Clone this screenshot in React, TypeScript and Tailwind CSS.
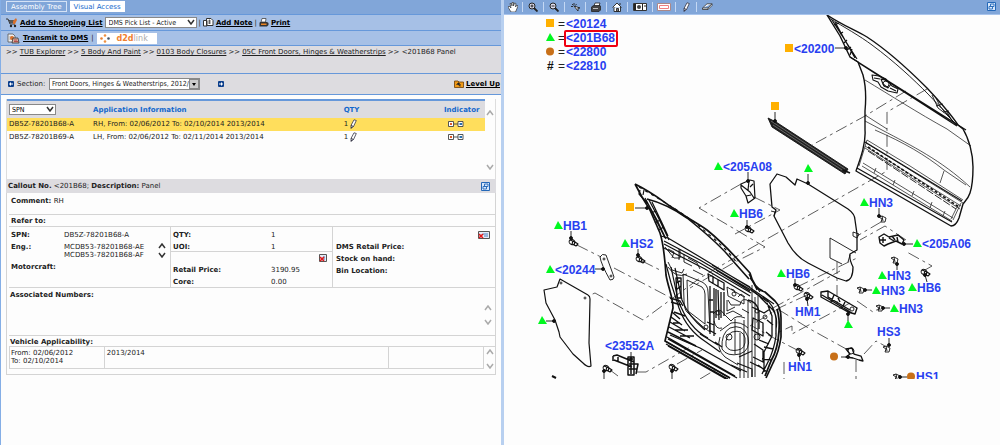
import type { ReactNode } from 'react'

type Mark = 'square' | 'triangle' | 'circle' | 'hash'

interface Callout {
  x: number
  y: number
  mark?: Mark
  text?: string
}

// x is the left edge of the mark (or of the text if there is no mark), y is the baseline
const callouts: Callout[] = [
  { x: 785, y: 53, mark: 'square', text: '<20200' },
  { x: 771, y: 111, mark: 'square' },
  { x: 626, y: 212, mark: 'square' },
  { x: 714, y: 171, mark: 'triangle', text: '<205A08' },
  { x: 804, y: 173, mark: 'triangle' },
  { x: 730, y: 218, mark: 'triangle', text: 'HB6' },
  { x: 860, y: 207, mark: 'triangle', text: 'HN3' },
  { x: 913, y: 248, mark: 'triangle', text: '<205A06' },
  { x: 554, y: 230, mark: 'triangle', text: 'HB1' },
  { x: 621, y: 248, mark: 'triangle', text: 'HS2' },
  { x: 546, y: 274, mark: 'triangle', text: '<20244' },
  { x: 538, y: 325, mark: 'triangle' },
  { x: 777, y: 278, mark: 'triangle', text: 'HB6' },
  { x: 878, y: 280, mark: 'triangle', text: 'HN3' },
  { x: 908, y: 292, mark: 'triangle', text: 'HB6' },
  { x: 872, y: 295, mark: 'triangle', text: 'HN3' },
  { x: 890, y: 313, mark: 'triangle', text: 'HN3' },
  { x: 844, y: 329, mark: 'triangle' },
  { x: 830, y: 361, mark: 'circle' },
  { x: 907, y: 381, mark: 'circle', text: 'HS1' },
  { x: 795, y: 316, text: 'HM1' },
  { x: 877, y: 336, text: 'HS3' },
  { x: 788, y: 371, text: 'HN1' },
  { x: 605, y: 350, text: '<23552A' },
]

const legend: { mark: Mark; text: string }[] = [
  { mark: 'square', text: '<20124' },
  { mark: 'triangle', text: '<201B68' },
  { mark: 'circle', text: '<22800' },
  { mark: 'hash', text: '<22810' },
]

// from x, from y, to x, to y
const arrows = [
  [835, 48, 846, 48],
  [775, 112, 775, 121],
  [635, 208, 647, 208],
  [748, 172, 748, 181],
  [808, 174, 808, 183],
  [747, 220, 747, 227],
  [879, 208, 879, 216],
  [913, 244, 904, 244],
  [571, 231, 571, 238],
  [638, 249, 638, 255],
  [595, 269, 603, 269],
  [546, 321, 554, 321],
  [795, 279, 795, 285],
  [897, 270, 897, 264],
  [927, 282, 925, 275],
  [872, 290, 865, 290],
  [890, 308, 883, 308],
  [848, 321, 848, 314],
  [841, 357, 848, 357],
  [907, 377, 900, 377],
  [808, 306, 807, 299],
  [889, 338, 889, 345],
  [800, 361, 799, 355],
  [631, 352, 631, 359],
  [604, 379, 604, 371],
  [672, 379, 672, 371],
]

const bolts = [
  [572, 242],
  [639, 259],
  [748, 229],
  [797, 287],
  [807, 295],
  [799, 351],
  [924, 272],
  [606, 368],
  [672, 367],
]

const nuts = [
  [883, 219],
  [895, 260],
  [861, 290],
  [880, 308],
  [887, 349],
  [897, 377],
]

const dashes = [
  'M927 89 887 112 887 171 751 248 700 278 643 320 595 293 588 296',
  'M906 91 865 116 812 145',
  'M741 184 699 208 765 247 735 262 690 288',
  'M754 197 780 210 735 234',
  'M577 245 601 257M614 268 673 299',
  'M642 261 662 271',
  'M881 222 857 236M906 240 885 226 860 240',
  'M797 287 857 258M773 308 840 271',
  'M925 270 932 266 905 251',
  'M837 262V308M850 303 792 334V326L775 334',
  'M857 301 873 312 880 308',
  'M807 295 781 307 750 326',
  'M799 351 770 336 752 326M848 350 810 329 776 308',
  'M864 354 876 341 885 346M856 360V379M784 362V379',
  'M610 370 618 376M637 372 646 372 690 347M677 364 702 350M700 379 715 370',
]

const MarkShape = ({ mark }: { mark: Mark }) => {
  if (mark === 'square') return <rect y="-9" width="8" height="8" fill="#ffb000" />
  if (mark === 'triangle') return <path d="M0 -1 4 -9 9 -1Z" fill="#00f820" />
  if (mark === 'circle') return <circle cx="4" cy="-4.5" r="4" fill="#c87018" />
  return (
    <text x="1" y="0" fontSize="12" fontWeight="bold" fill="#111">
      #
    </text>
  )
}

const OuterDoor = () => (
  <g>
    <path
      d="M827 15C842 25 853 29 867 37C890 52 908 69 927 88C941 103 951 114 958 125L963 129C969 139 973 154 973 167C973 179 972 187 970 193C968 199 965 201 963 204L959 218Q956 226 951 226L856 171C861 157 866 143 865 130V111Q867 90 863 75L858 62 850 57 840 36 827 15Z"
      strokeWidth="1.4"
    />
    <path d="M829 18C844 27 860 36 872 45C895 62 913 79 928 94C942 109 951 118 956 125" />
    <path d="M850 57 966 130M859 63 957 126" strokeWidth="1.3" />
    <path d="M832 20 857 59M835 22 846 42 855 58M840 34 843 32M844 43 847 40M847 50 851 47M834 25 839 23M850 55 852 49" strokeWidth="1.2" />
    <path d="M932 95 938 108 946 114 957 125M936 98 940 106 950 117M936 106 943 104M943 112 949 111M947 112 952 121" />
    <path d="M872 75 879 76 886 79 892 86 898 89 897 93 888 91 881 87 878 82 873 80ZM874 78 880 79M881 79 883 84 888 88 891 84 885 80ZM890 88 896 91" strokeWidth="1.1" />
    <circle cx="886" cy="84" r="3" />
    <g strokeWidth=".7">
      <path d="M865 80C890 95 918 113 947 129L971 146M865 115 887 129M865 121 882 130" />
      <path d="M875 130C905 143 925 155 944 170L966 185M882 130C912 146 941 160 970 187M944 171 940 183" />
      <path d="M867 140 910 166 963 200M866 143 907 168 963 203M865 146 905 171 961 206M865 148 960 209" />
      <path d="M867 140 859 166M961 203 953 220M958 205 951 219M863 163 953 218M862 166 952 221" />
      <path d="M876 168 874 173M895 180 893 185M914 191 912 196M932 202 930 208M945 211 943 216" />
    </g>
    <path d="M857 168 952 222M865 142 962 201" strokeWidth="1.2" />
    <path d="M868 147 959 207" strokeWidth="1.6" strokeDasharray="3 2" />
    <path d="M868 151 956 209" strokeDasharray="8 2" />
  </g>
)

const InnerDoor = () => (
  <g>
    <path
      d="M635 184C655 194 662 201 673 208C687 218 697 223 707 230C722 242 731 252 740 262L750 273Q754 289 765 292L775 301Q781 307 781 318V337Q779 352 773 363L766 378M730 378 665 341 673 308C673 297 668 287 666 275C665 261 664 245 660 233L650 210 642 197L635 184"
      strokeWidth="1.7"
    />
    <path d="M647 199C663 203 677 211 687 218C707 234 722 247 733 261L749 279" strokeWidth="1.6" />
    <path d="M640 190 639 194 648 204 665 238M645 198 657 220 666 239M649 200 659 219 669 240M652 202 663 225 668 236M655 223 660 220M651 213 656 211M658 230 664 227M644 190 643 195" strokeWidth="1.2" />
    <path d="M639 187C666 203 690 217 707 233Q726 248 738 264" strokeWidth="1.2" strokeDasharray="3 4" />
    <path d="M661 236 668 238 700 257 749 287 774 304M664 241 700 260 751 290 768 302M664 244 700 263 751 293M664 248 705 269 750 296M712 265 750 287M716 270 750 291" strokeWidth="1.2" />
    <path d="M665 247 674 258 680 258V249M668 249 674 252 672 258M668 262 672 270 682 273 684 269M679 249V260M668 267Q676 279 687 274M684 254V262L692 266M688 258 697 263 700 269M693 270 703 275" />
    <path d="M666 264 671 283 679 308C684 322 692 333 706 342L720 352M671 267 678 300C684 316 694 331 708 338M675 268 682 300Q688 316 705 330" strokeWidth="1.2" />
    <path d="M683 274 702 282Q708 285 708 292L710 332 702 326 687 312Q684 309 684 300ZM687 280 702 287Q705 290 705 294V324L688 311Z" />
    <path d="M676 278H681V298H677ZM676 283 680 281M676 290 681 286M670 298 680 301 683 306M671 302 681 305M674 312 685 316" strokeWidth="1.4" />
    <path d="M671 317 682 325M670 322 685 331M669 327 690 338M668 332 696 346M672 312 680 319M673 323H680M675 330H688M680 336H694" strokeWidth="1.4" />
    <path d="M665 341 730 378M667 337 735 376M666 344 728 379M668 346 726 379M670 335 700 348 741 371M668 339 737 378" strokeWidth="1.3" />
    <path d="M708 274 724 283V290L709 281ZM713 276V284M718 279V287M710 286V334M714 288V336M718 290 719 320M721 292V318M724 292V316M716 289V318M709 300H713M710 312H714M707 322 714 325M709 330 716 334" strokeWidth="1.3" />
    <path d="M727 287 744 297V304L728 296ZM731 289Q735 289 735 293M728 300 731 305H740M727 300V311L735 307M738 297 741 294 745 297M740 305Q741 298 747 300L751 303M726 314 733 311 742 316M742 309 749 313" />
    <circle cx="718" cy="313" r="2" />
    <circle cx="706" cy="327" r="2" />
    <circle cx="734" cy="294" r="2" />
    <circle cx="729" cy="337" r="3" />
    <path d="M713 314Q719 306 724 314L731 321Q736 314 745 318M714 321Q716 330 722 328M720 331 731 323Q741 321 748 328M722 349Q721 333 730 328Q743 323 748 337Q751 350 740 354Q727 357 722 349ZM726 346Q725 336 732 332Q743 329 745 338Q746 349 738 350Q729 352 726 346M720 337Q716 349 725 357L738 365" />
    <path d="M735 319V354M740 333V378M744 320V378M748 300V378M752 285V377M755 297V377M758 296V340" strokeWidth=".9" />
    <path d="M748 300Q757 302 759 311V329M752 307 764 313 770 309M753 318 763 323V336L752 330ZM760 297 773 310Q778 317 776 329M763 297Q775 305 776 319V336Q774 350 768 362L762 374M767 303 772 316V336L764 352V372M754 344 763 350V362L753 357M750 362 762 368M767 320 773 325M766 332 771 336M759 340 769 344M764 347 773 349M762 359 771 360M758 365 767 372" strokeWidth="1.3" />
    <circle cx="757" cy="337" r="3" />
    <circle cx="765" cy="317" r="2" />
    <circle cx="757" cy="311" r="2" />
    <path d="M777 309Q780 319 779 331Q778 349 771 361L765 376" strokeWidth="1.8" />
    <path d="M737 363 752 369V377M731 365 747 372M739 357 752 351M715 342 722 347M700 334 718 345M750 278 760 292M753 291 763 299M749 274 757 290" strokeWidth="1.2" />
  </g>
)

const SmallParts = () => (
  <g>
    <path d="M768 118 776 122 848 169 845 174 772 127Z" fill="#222" />
    <path d="M771 121 845 169M773 125 842 170" stroke="#aaa" strokeWidth=".5" />
    <path d="M843 170 850 173" strokeWidth="1.6" />
    <path
      d="M770 184 777 174 786 177 795 185 797 179 808 184 848 209Q855 214 855 220L857 234V250L850 254Q849 259 853 267Q853 280 846 281L837 278 808 263C798 258 792 250 788 243L774 216 776 210 772 207Z"
      strokeWidth="1.3"
    />
    <path d="M830 238 856 253M830 238V258L842 264M850 255 848 262M771 211 775 212 774 216M853 232 859 234 857 238 853 236Z" />
    <path d="M544 290 557 287 560 279 588 295Q590 296 590 299L589 343 591 366Q588 368 583 363L573 354 560 337 559 332 555 320 546 303Z" strokeWidth="1.2" />
    <circle cx="561" cy="283" r="1" />
    <circle cx="585" cy="298" r="1" />
    <path d="M600 257Q602 253 606 255L614 277Q614 280 610 280Q601 264 600 257Z" />
    <circle cx="604" cy="259" r="1" />
    <circle cx="611" cy="276" r="1" />
    <path d="M741 184 750 180 754 181 755 198 748 203 746 196 741 188ZM741 185 750 192 754 198M749 181 748 190M746 196 751 195M753 184 750 187" strokeWidth="1.2" />
    <path d="M879 237 884 234 889 237 898 235 904 240 902 244 896 241 888 244 884 246 880 243ZM883 237V243M889 238 894 241M897 237 898 242M880 240 886 240M892 236 895 240" strokeWidth="1.4" />
    <path d="M821 292 828 291 857 308 855 314 848 312 821 297ZM828 291V297L850 310M834 295 831 302M845 302 842 308M822 295 852 313M838 298 840 302" strokeWidth="1.4" />
    <circle cx="852" cy="309" r="2" />
    <path d="M846 349 852 348 854 354 861 356 863 361 859 360 853 358 846 357 850 354Z" strokeWidth="1.3" />
    <circle cx="851" cy="351" r="3" />
    <path d="M613 356 617 355 634 362M614 360 632 367M613 356V361M618 357V361M628 357H634V375H628ZM629 364H638L636 374M629 369H637M631 360V374" strokeWidth="1.5" />
    <path d="M552 376 556 378" strokeWidth="2" />
  </g>
)

const Diagram = () => (
  <svg
    viewBox="504 15 496 364"
    className="block w-full"
    fontFamily='"Liberation Sans", Arial, sans-serif'
    role="img"
    aria-label="Front door exploded view"
  >
    <g fill="none" stroke="#333" strokeWidth=".8" strokeDasharray="12 4 3 4">
      {dashes.map((d) => (
        <path key={d} d={d} />
      ))}
    </g>
    <g fill="none" stroke="#111" strokeWidth=".9" strokeLinejoin="round">
      <OuterDoor />
      <InnerDoor />
      <SmallParts />
      {bolts.map(([x, y]) => (
        <g key={`${x}-${y}`} transform={`translate(${x} ${y})`}>
          <ellipse rx="3" ry="2.5" transform="rotate(25)" />
          <path d="M-2 -2 3 0 6 2 4 4 0 2M1 -1 0 2M3 0 2 3" strokeWidth="1.1" />
        </g>
      ))}
      {nuts.map(([x, y]) => (
        <path key={`${x}-${y}`} transform={`translate(${x} ${y})`} d="M-4 -2 -1 -3 3 -1 2 3 -2 3 -1 0ZM-1 -3 0 2" />
      ))}
      {arrows.map(([x1, y1, x2, y2]) => (
        <g key={`${x1}-${y1}`}>
          <path d={`M${x1} ${y1} ${x2} ${y2}`} />
          <circle cx={x2} cy={y2} r="1.5" fill="#111" />
        </g>
      ))}
    </g>
    <g fontSize="12" fontWeight="bold" fill="#2840f0">
      {callouts.map(({ x, y, mark, text }) => (
        <g key={`${x}-${y}`} transform={`translate(${x} ${y})`}>
          {mark && <MarkShape mark={mark} />}
          {text && <text x={mark ? 9 : 0}>{text}</text>}
        </g>
      ))}
      {legend.map(({ mark, text }, i) => (
        <g key={text} transform={`translate(546 ${28 + i * 14})`}>
          <MarkShape mark={mark} />
          <text x="12" fill="#222" fontWeight="normal">
            =
          </text>
          <text x="20">{text}</text>
        </g>
      ))}
    </g>
    <rect x="565" y="31" width="52" height="15" rx="1" fill="none" stroke="#f00010" strokeWidth="2" />
  </svg>
)

const Chevron = ({ up, dark }: { up?: boolean; dark?: boolean }) => (
  <svg viewBox="0 0 8 6" className={`block w-2 h-1.5 fill-none ${dark ? 'stroke-[#333]' : 'stroke-[#aaa]'}`} strokeWidth="1.5">
    <path d={up ? 'M1 5 4 1 7 5' : 'M1 1 4 5 7 1'} />
  </svg>
)

const Scroller = ({ dark, className }: { dark?: boolean; className: string }) => (
  <div className={`flex flex-col justify-between ${className}`}>
    <button aria-label="Scroll up">
      <Chevron up dark={dark} />
    </button>
    <button aria-label="Scroll down">
      <Chevron dark={dark} />
    </button>
  </div>
)

const CartIcon = () => (
  <svg viewBox="0 0 12 10" className="w-3 h-2.5 shrink-0">
    <path d="M0 1H2L4 6H9" fill="none" stroke="#333" />
    <path d="M3 2H8V5H4Z" fill="#333" />
    <path d="M5 2V5M7 2V5" stroke="#ccc" strokeWidth=".5" />
    <path d="M7 3 10 0 11 2 9 6H7Z" fill="#d8702c" />
    <circle cx="5" cy="8" r="1.2" fill="#222" />
    <circle cx="9" cy="8" r="1.2" fill="#222" />
  </svg>
)

const NoteIcon = () => (
  <svg viewBox="0 0 11 9" className="w-[11px] h-[9px] shrink-0" fill="#fff" stroke="#333">
    <path d="M.5 2.5H4V8H.5ZM3.5 .5H8L10 2.5V7.5H3.5Z" />
    <path d="M5 3H8M5 5H8M6.5 1.5V6" strokeWidth=".7" />
  </svg>
)

const PrintIcon = () => (
  <svg viewBox="0 0 10 9" className="w-2.5 h-[9px] shrink-0">
    <path d="M3 .5H7L6.500 4H2Z" fill="#fff" stroke="#444" strokeWidth=".8" />
    <path d="M1 4H8L9.500 5V7L8 8.500H.5V5Z" fill="#333" />
    <path d="M2 5.500H7.500V7H2Z" fill="#e98220" />
  </svg>
)

const TransmitIcon = () => (
  <svg viewBox="0 0 13 11" className="w-[13px] h-[11px] shrink-0">
    <path d="M1 1H6L8 3V9H1Z" fill="#eee" stroke="#555" strokeWidth=".8" />
    <path d="M2 4H6M2 6H5" stroke="#888" strokeWidth=".6" />
    <circle cx="5" cy="5" r="2" fill="#d8702c" />
    <path d="M6 5H11L12 10H5Z" fill="#d8b0a0" stroke="#333" strokeWidth=".8" />
    <path d="M7 7H10M7 8.500H11" stroke="#a33" strokeWidth=".8" />
  </svg>
)

const LevelUpIcon = () => (
  <svg viewBox="0 0 10 8" className="w-2.5 h-2 shrink-0">
    <path d="M.5 1H4L5 2H9.500V7.500H.5Z" fill="#f09a18" stroke="#6b3d08" strokeWidth=".8" />
    <path d="M4.500 2.500 2.500 4.500H6.500ZM4 4.500H5V6H7" fill="#222" stroke="#222" strokeWidth=".5" />
  </svg>
)

const PencilIcon = () => (
  <svg viewBox="0 0 7 10" className="w-[7px] h-2.5" fill="#fff" stroke="#334">
    <path d="M4 .8 6.300 1.500 3.500 7.500 1 9.300 1 6.500Z" strokeWidth=".8" />
    <path d="M1 6.500 3.500 7.500M1 9.300 2 8" />
  </svg>
)

const IndicatorIcon = () => (
  <svg viewBox="0 0 16 6" className="w-4 h-1.5" fill="#fff" stroke="#444">
    <path d="M.5 .5H5.500V5.500H.5ZM10 .5H15V5.500H10ZM6 3H10" strokeWidth=".9" />
    <rect x="2" y="2" width="2" height="2" fill="#e05a2a" stroke="none" />
    <rect x="11.500" y="2" width="2.500" height="2" fill="#2870b0" stroke="none" />
  </svg>
)

const WindowIcon = () => (
  <svg viewBox="0 0 9 9" className="w-[9px] h-[9px]" fill="#d8e8fc" stroke="#2468b8">
    <path d="M.5 .5H8.500V8.500H.5Z" />
    <path d="M3.500 2H7V4.500H3.500ZM2 4.500H5.500V7H2Z" strokeWidth=".9" />
  </svg>
)

const ErrorIcon = ({ wide }: { wide?: boolean }) => (
  <svg viewBox={wide ? '0 0 12 8' : '0 0 8 8'} className={wide ? 'w-3 h-2' : 'w-2 h-2'} fill="#e4ecf8" stroke="#555">
    <path d={wide ? 'M.5 .5H11.500V7.500H.5Z' : 'M.5 .5H7.500V7.500H.5Z'} />
    <path d={wide ? 'M5 3H10M6 5H10' : 'M5 2V6'} stroke="#4a7fc0" />
    <path d="M1 3 5 7M5 3 1 7" stroke="#e01818" strokeWidth="1.600" />
  </svg>
)

const ArrowButton = ({ label, left }: { label: string; left?: boolean }) => (
  <button aria-label={label} className="flex items-center justify-center w-1.5 h-1.5 rounded-[1px] bg-[#0c3f8c]">
    <svg viewBox="0 0 4 4" className="w-1 h-1 fill-white">
      <path d={left ? 'M0 2 2 0V1.500H4V2.500H2V4Z' : 'M4 2 2 0V1.500H0V2.500H2V4Z'} />
    </svg>
  </button>
)

const ToolLink = ({ children }: { children: ReactNode }) => (
  <a href="#" className="font-bold underline text-black whitespace-nowrap">
    {children}
  </a>
)

const crumbs = ['TUB Explorer', '5 Body And Paint', '0103 Body Closures', '05C Front Doors, Hinges & Weatherstrips']

const rows = [
  { spn: 'DB5Z-78201B68-A', info: 'RH, From: 02/06/2012 To: 02/10/2014 2013/2014', qty: 1 },
  { spn: 'DB5Z-78201B69-A', info: 'LH, From: 02/06/2012 To: 02/11/2014 2013/2014', qty: 1 },
]

const Toolbars = () => (
  <>
    <div className="flex items-start gap-[3px] h-[15px] pl-[5px] pt-px bg-[#81a6d9] border-b border-[#6698da]">
      <button className="h-[11px] px-1 border border-[#d4e2f6] text-white whitespace-nowrap">Assembly Tree</button>
      <button className="h-[11px] px-1 bg-white text-[#1468cc] whitespace-nowrap">Visual Access</button>
    </div>
    <div className="flex items-center gap-0.5 h-4 pl-[5px] bg-[#a6c0e6] border-b border-[#6698da]">
      <CartIcon />
      <ToolLink>Add to Shopping List</ToolLink>
      <div className="relative">
        <select
          aria-label="Pick list"
          className='block appearance-none w-[92px] h-[11px] pl-[3px] bg-white border border-[#888] font-["DejaVu_Sans_Condensed","DejaVu_Sans",sans-serif]'
        >
          <option>DMS Pick List - Active</option>
        </select>
        <span className="absolute right-0.5 top-0.5 pointer-events-none">
          <Chevron dark />
        </span>
      </div>
      <span>|</span>
      <NoteIcon />
      <ToolLink>Add Note</ToolLink>
      <span>|</span>
      <PrintIcon />
      <ToolLink>Print</ToolLink>
    </div>
    <div className="flex items-center gap-[3px] h-[15px] pl-1.5 bg-[#a6c0e6] border-b border-[#6698da]">
      <TransmitIcon />
      <ToolLink>Transmit to DMS</ToolLink>
      <span>|</span>
      <a href="#" className="flex items-center gap-[7px] h-[11px] w-[60px] px-[3px] bg-white text-[#aaa]">
        <svg viewBox="0 0 10 9" className="w-2.5 h-[9px]">
          <circle cx="5" cy="1.500" r="1.300" fill="#f09040" />
          <circle cx="8.500" cy="4.500" r="1.300" fill="#456" />
          <circle cx="5" cy="7.500" r="1.300" fill="#f09040" />
          <circle cx="1.500" cy="4.500" r="1.300" fill="#e88030" />
        </svg>
        <span className="text-[8px] leading-[9px]">
          <b className="text-[#f08030]">d2d</b>link
        </span>
      </a>
    </div>
  </>
)

const PartsTable = () => (
  <div className="flex ml-[5px] mr-[5px] mt-1 h-20 border-r border-[#ddd]">
    <div className="flex-1 border-l border-[#ddd]">
      <table className="w-full table-fixed border-collapse">
        <thead>
          <tr className="h-[18px] text-left text-[#1468cc] bg-[#dddce0] border-t-2 border-[#6698da]">
            <th className="w-[18%] p-0 pl-0.5">
              <div className="relative w-[47px] font-normal text-black">
                <select
                  aria-label="Number type"
                  className='block appearance-none w-full h-[11px] pl-0.5 bg-white border border-[#888] font-["DejaVu_Sans_Condensed","DejaVu_Sans",sans-serif]'
                >
                  <option>SPN</option>
                </select>
                <span className="absolute right-0.5 top-0.5 pointer-events-none">
                  <Chevron dark />
                </span>
              </div>
            </th>
            <th className="p-0">Application Information</th>
            <th className="w-[21%] p-0">QTY</th>
            <th className="w-[41px] p-0">Indicator</th>
          </tr>
        </thead>
        <tbody className="leading-[8px]">
          {rows.map((row, i) => (
            <tr key={row.spn} className={`h-[13px] ${i === 0 ? 'bg-[#ffde5c]' : ''}`}>
              <td className="p-0 pl-0.5 pb-0.5">{row.spn}</td>
              <td className="p-0 pb-0.5">{row.info}</td>
              <td className="p-0 pb-0.5">
                <span className="flex items-center gap-0.5">
                  {row.qty}
                  <button aria-label="Edit quantity">
                    <PencilIcon />
                  </button>
                </span>
              </td>
              <td className="p-0 pl-1 pb-0.5">
                <IndicatorIcon />
              </td>
            </tr>
          ))}
        </tbody>
      </table>
    </div>
    <Scroller className="w-[10px] pt-[11px] pb-[9px] pl-px" />
  </div>
)

const Details = () => (
  <section className="mx-[5px] border border-t-0 border-[#d4d4d4] pl-0.5 pb-[5px]">
    <div className="h-[22px] pt-1 pl-0.5 border-b border-[#d4d4d4]">
      <b>Comment:</b> RH
    </div>
    <div className="h-3 pt-0.5 pl-0.5 border-b border-[#d4d4d4]">
      <b>Refer to:</b>
    </div>
    <div className="grid grid-cols-3 h-[61px] border-b border-[#d4d4d4] divide-x divide-[#d4d4d4]">
      <div className="flex pt-1 pl-0.5">
        <dl className="grid flex-1 grid-cols-[53px_1fr] content-start gap-y-1">
          <dt className="font-bold">SPN:</dt>
          <dd>DB5Z-78201B68-A</dd>
          <dt className="font-bold">Eng.:</dt>
          <dd>
            MCDB53-78201B68-AE
            <br />
            MCDB53-78201B68-AF
          </dd>
          <dt className="font-bold">Motorcraft:</dt>
        </dl>
        <Scroller dark className="h-[15px] mt-3 mr-1" />
      </div>
      <div>
        <dl className="grid grid-cols-[98px_1fr] content-start gap-y-1 h-[25px] pt-1 pl-0.5 border-b border-[#d4d4d4]">
          <dt className="font-bold">QTY:</dt>
          <dd>1</dd>
          <dt className="font-bold">UOI:</dt>
          <dd>1</dd>
        </dl>
        <div className="flex justify-end pt-0.5 pr-[5px]">
          <ErrorIcon />
        </div>
        <dl className="grid grid-cols-[98px_1fr] gap-y-1 pt-1 pl-0.5">
          <dt className="font-bold">Retail Price:</dt>
          <dd>3190.95</dd>
          <dt className="font-bold">Core:</dt>
          <dd>0.00</dd>
        </dl>
      </div>
      <div className="flex flex-col gap-1 pt-1 pl-[3px] pr-[5px] font-bold">
        <div className="flex justify-end">
          <ErrorIcon wide />
        </div>
        <span>DMS Retail Price:</span>
        <span>Stock on hand:</span>
        <span>Bin Location:</span>
      </div>
    </div>
    <div className="flex justify-between h-12 pt-[3px] pl-px border-b border-[#d4d4d4]">
      <b>Associated Numbers:</b>
      <Scroller className="h-5 mt-3.5 mr-[3px]" />
    </div>
    <div className="h-[11px] pt-0.5 pl-px border-b border-[#d4d4d4]">
      <b>Vehicle Applicability:</b>
    </div>
    <div className="flex">
      <table className="flex-1 table-fixed border-collapse border-x border-b border-[#d4d4d4]">
        <tbody>
          <tr className="h-5 align-top">
            <td className="w-[20%] p-0 pl-px pt-0.5">
              From: 02/06/2012
              <br />
              To: 02/10/2014
            </td>
            <td className="p-0 pl-0.5 pt-0.5 border-l border-[#d4d4d4]">2013/2014</td>
            <td className="w-[20%] border-l border-[#d4d4d4]"></td>
          </tr>
        </tbody>
      </table>
      <Scroller className="h-5 mt-0.5 ml-0.5 mr-px" />
    </div>
  </section>
)

const LeftPanel = () => (
  <main className="w-[50.4%] shrink-0 border-l border-l-[#84aee6] border-r-[3px] border-r-[#b8d0f0]">
    <Toolbars />
    <nav className="flex items-start gap-0.5 h-7 pl-[5px] pt-0.5 bg-[#dddce0] border-b border-[#6698da] whitespace-nowrap">
      {crumbs.map((crumb) => (
        <span key={crumb} className="flex gap-0.5">
          <span>&gt;&gt;</span>
          <a href="#" className="underline">
            {crumb}
          </a>
        </span>
      ))}
      <span>&gt;&gt; &lt;201B68 Panel</span>
    </nav>
    <div className="flex items-center h-[21px] pl-[7px] pr-px bg-[#dddce0] border-b border-[#6698da]">
      <ArrowButton label="Previous section" left />
      <label htmlFor="section" className="w-8 ml-[3px]">
        Section:
      </label>
      <div className="relative">
        <select
          id="section"
          className='block appearance-none w-[151px] h-3 pl-0.5 pr-2.5 bg-white border border-[#888] font-["DejaVu_Sans_Condensed","DejaVu_Sans",sans-serif]'
        >
          <option>Front Doors, Hinges &amp; Weatherstrips, 2012/ Front</option>
        </select>
        <span className="absolute right-px top-px flex items-center justify-center w-2.5 h-2.5 bg-[#ccc] border border-[#888] pointer-events-none">
          <svg viewBox="0 0 4 3" className="w-1 h-[3px]">
            <path d="M0 0H4L2 3Z" />
          </svg>
        </span>
      </div>
      <span className="w-[18px]"></span>
      <ArrowButton label="Next section" />
      <span className="flex items-center gap-0.5 ml-auto">
        <LevelUpIcon />
        <ToolLink>Level Up</ToolLink>
      </span>
    </div>
    <PartsTable />
    <div className="flex items-center justify-between h-3.5 mx-[5px] pl-0.5 pr-1.5 bg-[#dddce0]">
      <span>
        <b>Callout No.</b> &lt;201B68; <b>Description:</b> Panel
      </span>
      <button aria-label="Open in window">
        <WindowIcon />
      </button>
    </div>
    <Details />
  </main>
)

const tools: { label: string; width: string; icon: ReactNode }[] = [
  {
    label: 'Pan',
    width: 'w-[18px]',
    icon: <path d="M3 10 0 5 1 4 3 6 2 1.500H3.500L4 4V.5H5.500V4L6.500 1 8 1.500 7.500 5 9 3 10 4 7.500 10Z" fill="#fff" stroke="#333" strokeWidth=".7" />,
  },
  {
    label: 'Zoom in',
    width: 'w-5',
    icon: (
      <g stroke="#222" fill="#dde">
        <circle cx="4" cy="4" r="3" />
        <path d="M6 6 9.500 9.500" strokeWidth="1.800" />
        <path d="M2.500 4H5.500M4 2.500V5.500" />
      </g>
    ),
  },
  {
    label: 'Zoom out',
    width: 'w-5',
    icon: (
      <g stroke="#222" fill="#dde">
        <circle cx="4" cy="4" r="3" />
        <path d="M6 6 9.500 9.500" strokeWidth="1.800" />
        <path d="M2.500 4H5.500" />
      </g>
    ),
  },
  {
    label: 'Select hotspot',
    width: 'w-5',
    icon: (
      <g stroke="#222" strokeWidth=".9">
        <path d="M4 1V3M1 4.500H3M2 2 3.500 3.500M6.500 2 5.500 3.500" />
        <path d="M4 4 8 9 8 6 10 6Z" fill="#fff" />
      </g>
    ),
  },
  {
    label: 'Print',
    width: 'w-5',
    icon: (
      <g stroke="#222" strokeWidth=".8">
        <path d="M3 4 4 1H9L8 4" fill="#fff" />
        <path d="M1 4.500 3 3.500H9L10 5V7.500L8 9.500H.5V5Z" fill="#444" />
        <path d="M2 6.500H7" stroke="#ddd" />
      </g>
    ),
  },
  {
    label: 'Home',
    width: 'w-5',
    icon: (
      <g stroke="#222" fill="#fff" strokeWidth=".9">
        <path d="M2 5V9.500H8.500V5M.5 5.500 5 1 9.500 5.500M8 3V1" />
        <path d="M4.500 9.500V6.500H6.500V9.500Z" fill="#777" />
      </g>
    ),
  },
]

const DiagramToolbar = () => (
  <div className="flex items-center h-[15px] pb-px pr-1 bg-[#81a6d9] border-b border-[#a8c4ec]">
    {tools.map((tool) => (
      <button key={tool.label} aria-label={tool.label} className={`flex justify-center h-2.5 border-r border-[#c4d8f4] box-content ${tool.width}`}>
        <svg viewBox="0 0 10 10" className="w-2.5 h-2.5">
          {tool.icon}
        </svg>
      </button>
    ))}
    <button aria-label="Compare" className="flex items-center justify-center w-6 h-2.5 border-r border-[#c4d8f4] box-content">
      <svg viewBox="0 0 14 8" className="w-3.5 h-2">
        <path d="M.5 .5H13.500V7.500H.5Z" fill="#fff" stroke="#333" />
        <path d="M1 1H3V7H1ZM9 1H10V7H9Z" fill="#222" />
        <circle cx="6" cy="4" r="2" fill="#444" />
        <path d="M11 3H13" stroke="#222" />
      </svg>
    </button>
    <button aria-label="Rectangle" className="flex items-center justify-center w-[22px] h-2.5 border-r border-[#c4d8f4] box-content">
      <svg viewBox="0 0 14 8" className="w-3.5 h-2">
        <path d="M.5 .5H13.500V7.500H.5Z" fill="#fff" stroke="#a88" />
        <path d="M2.500 2.500H11.500V5.500H2.500Z" fill="#fff" stroke="#f08080" />
      </svg>
    </button>
    <button aria-label="Draw" className="flex items-center justify-center w-5 h-2.5 border-r border-[#c4d8f4] box-content">
      <PencilIcon />
    </button>
    <button aria-label="Erase" className="flex items-center justify-center w-5 h-2.5">
      <svg viewBox="0 0 11 7" className="w-[11px] h-[7px]" fill="#fff" stroke="#333" strokeWidth=".8">
        <path d="M.5 5 5 .8H10L6 5ZM.5 5V6.500H6L10 2.500V.8M6 5V6.500" />
      </svg>
    </button>
    <button aria-label="Open in window" className="ml-auto">
      <WindowIcon />
    </button>
  </div>
)

const App = () => {
  return (
    <div className={`flex min-h-screen bg-[#fdfdfd] text-[#222] font-["DejaVu_Sans",Verdana,sans-serif] text-[7px] leading-[8px]`}>
      <LeftPanel />
      <aside className="flex-1 min-w-0">
        <DiagramToolbar />
        <Diagram />
      </aside>
    </div>
  )
}

export default App
